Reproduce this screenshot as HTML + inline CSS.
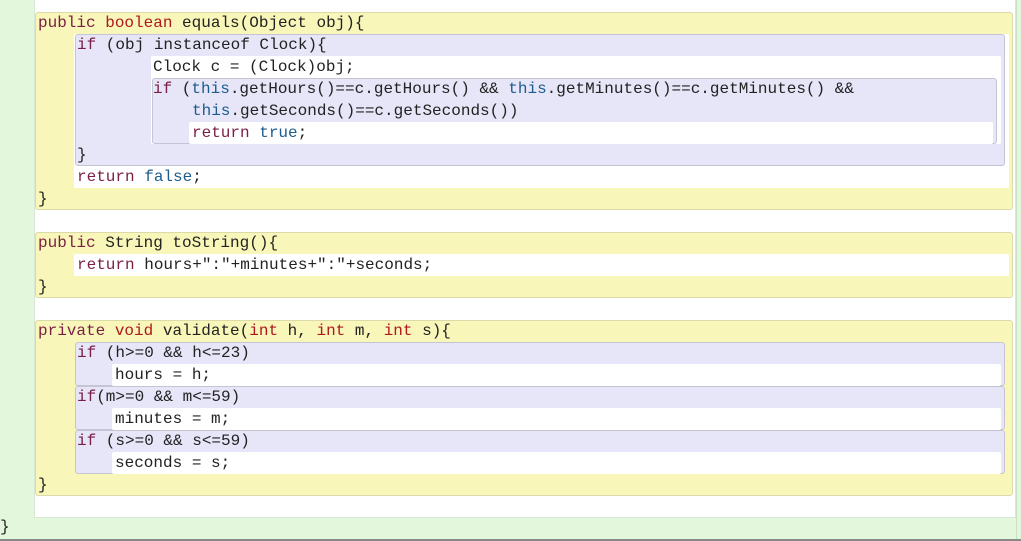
<!DOCTYPE html>
<html><head><style>
body{margin:0;width:1021px;height:541px;background:#e2f7dc;position:relative;overflow:hidden;font-family:"Liberation Mono",monospace;font-size:16px;color:#222}
.b{position:absolute;box-sizing:border-box}
.y{background:#f8f6b8;border:1px solid #dcdaa8;border-radius:3px}
.l{background:#e6e6f8;border:1px solid #c4c4d4;border-radius:3px}
.w{background:#fff;border-radius:2px}
.t{position:absolute;white-space:pre;line-height:22px;height:22px}
.k{color:#7a1e45}.r{color:#b01820}.u{color:#1d5c8c}
</style></head><body>
<div class="b" style="left:34px;top:0;width:982px;height:518px;background:#fff;border:1px solid #d8e8d4;border-top:none"></div>
<div class="b" style="left:1016px;top:0;width:5px;height:541px;background:#e2f7dc;border-left:1px solid #c8e0c4"></div>

<div class="b y" style="left:35px;top:12px;width:978px;height:198px"></div>
<div class="b w" style="left:74px;top:34px;width:935px;height:154px"></div>
<div class="b l" style="left:75px;top:34px;width:930px;height:132px"></div>
<div class="b w" style="left:151px;top:56px;width:850px;height:88px"></div>
<div class="b l" style="left:152px;top:78px;width:845px;height:66px"></div>
<div class="b w" style="left:189px;top:122px;width:804px;height:22px"></div>

<div class="t" style="left:38px;top:12px"><span class="k">public</span> <span class="r">boolean</span> equals(Object obj){</div>
<div class="t" style="left:77px;top:34px"><span class="k">if</span> (obj instanceof Clock){</div>
<div class="t" style="left:153px;top:56px">Clock c = (Clock)obj;</div>
<div class="t" style="left:153px;top:78px"><span class="k">if</span> (<span class="u">this</span>.getHours()==c.getHours() &amp;&amp; <span class="u">this</span>.getMinutes()==c.getMinutes() &amp;&amp;</div>
<div class="t" style="left:192px;top:100px"><span class="u">this</span>.getSeconds()==c.getSeconds())</div>
<div class="t" style="left:192px;top:122px"><span class="k">return</span> <span class="u">true</span>;</div>
<div class="t" style="left:77px;top:144px">}</div>
<div class="t" style="left:77px;top:166px"><span class="k">return</span> <span class="u">false</span>;</div>
<div class="t" style="left:38px;top:188px">}</div>

<div class="b y" style="left:35px;top:232px;width:978px;height:66px"></div>
<div class="b w" style="left:74px;top:254px;width:935px;height:22px"></div>
<div class="t" style="left:38px;top:232px"><span class="k">public</span> String toString(){</div>
<div class="t" style="left:77px;top:254px"><span class="k">return</span> hours+":"+minutes+":"+seconds;</div>
<div class="t" style="left:38px;top:276px">}</div>

<div class="b y" style="left:35px;top:320px;width:978px;height:176px"></div>
<div class="b l" style="left:75px;top:342px;width:930px;height:44px"></div>
<div class="b w" style="left:112px;top:364px;width:889px;height:22px"></div>
<div class="b l" style="left:75px;top:386px;width:930px;height:44px"></div>
<div class="b w" style="left:112px;top:408px;width:889px;height:22px"></div>
<div class="b l" style="left:75px;top:430px;width:930px;height:44px"></div>
<div class="b w" style="left:112px;top:452px;width:889px;height:22px"></div>
<div class="t" style="left:38px;top:320px"><span class="k">private</span> <span class="r">void</span> validate(<span class="r">int</span> h, <span class="r">int</span> m, <span class="r">int</span> s){</div>
<div class="t" style="left:77px;top:342px"><span class="k">if</span> (h&gt;=0 &amp;&amp; h&lt;=23)</div>
<div class="t" style="left:115px;top:364px">hours = h;</div>
<div class="t" style="left:77px;top:386px"><span class="k">if</span>(m&gt;=0 &amp;&amp; m&lt;=59)</div>
<div class="t" style="left:115px;top:408px">minutes = m;</div>
<div class="t" style="left:77px;top:430px"><span class="k">if</span> (s&gt;=0 &amp;&amp; s&lt;=59)</div>
<div class="t" style="left:115px;top:452px">seconds = s;</div>
<div class="t" style="left:38px;top:474px">}</div>

<div class="t" style="left:0px;top:516px">}</div>
<div class="b" style="left:0;top:539px;width:1021px;height:2px;background:#888"></div>
</body></html>
